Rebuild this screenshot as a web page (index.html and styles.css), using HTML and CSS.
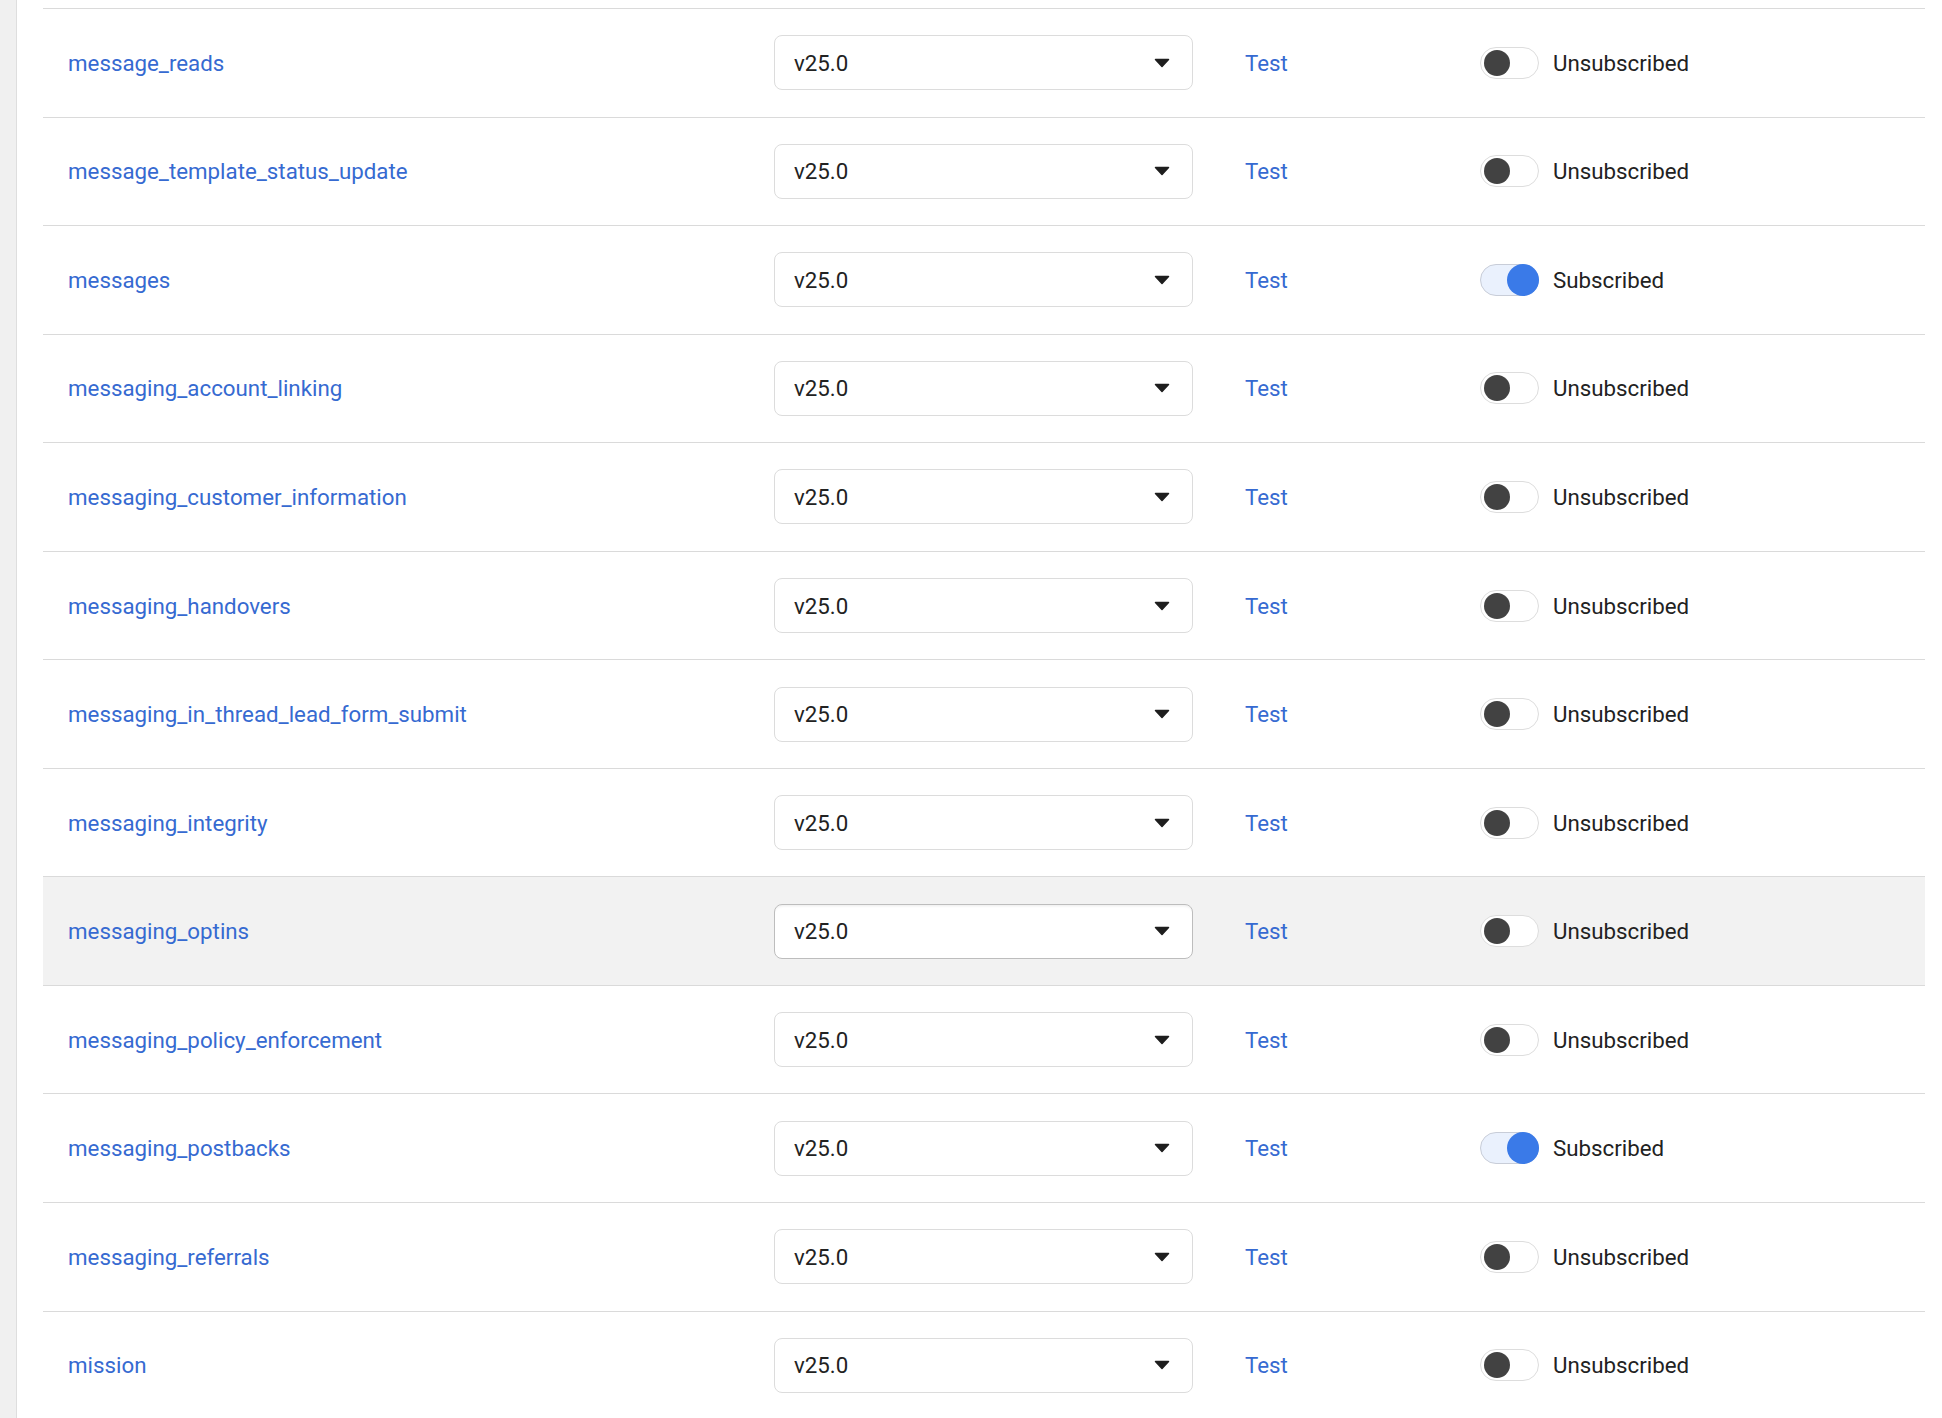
FILE: index.html
```html
<!DOCTYPE html>
<html lang="en">
<head>
    <meta charset="UTF-8">
    <meta name="viewport" content="width=device-width, initial-scale=1.0">
    <title>Webhook Fields</title>
    <link rel="stylesheet" href="styles.css">
</head>
<body>
    <div class="page">
        <div class="sidebar"></div>

        <div class="content">
            <div class="fields-list">
                <div class="field-row">
                    <a class="field-name" href="#">message_reads</a>
                    <div class="version-cell"><div class="version-select"><span>v25.0</span><svg class="caret" width="16" height="10" viewBox="0 0 16 10"><path d="M1.5 1.5 H14.5 L8 8.5 Z"/></svg></div></div>
                    <a class="test-link" href="#">Test</a>
                    <div class="sub-cell"><span class="toggle"><span class="knob"></span></span><span class="sub-label">Unsubscribed</span></div>
                </div>
                <div class="field-row">
                    <a class="field-name" href="#">message_template_status_update</a>
                    <div class="version-cell"><div class="version-select"><span>v25.0</span><svg class="caret" width="16" height="10" viewBox="0 0 16 10"><path d="M1.5 1.5 H14.5 L8 8.5 Z"/></svg></div></div>
                    <a class="test-link" href="#">Test</a>
                    <div class="sub-cell"><span class="toggle"><span class="knob"></span></span><span class="sub-label">Unsubscribed</span></div>
                </div>
                <div class="field-row">
                    <a class="field-name" href="#">messages</a>
                    <div class="version-cell"><div class="version-select"><span>v25.0</span><svg class="caret" width="16" height="10" viewBox="0 0 16 10"><path d="M1.5 1.5 H14.5 L8 8.5 Z"/></svg></div></div>
                    <a class="test-link" href="#">Test</a>
                    <div class="sub-cell"><span class="toggle on"><span class="knob"></span></span><span class="sub-label">Subscribed</span></div>
                </div>
                <div class="field-row">
                    <a class="field-name" href="#">messaging_account_linking</a>
                    <div class="version-cell"><div class="version-select"><span>v25.0</span><svg class="caret" width="16" height="10" viewBox="0 0 16 10"><path d="M1.5 1.5 H14.5 L8 8.5 Z"/></svg></div></div>
                    <a class="test-link" href="#">Test</a>
                    <div class="sub-cell"><span class="toggle"><span class="knob"></span></span><span class="sub-label">Unsubscribed</span></div>
                </div>
                <div class="field-row">
                    <a class="field-name" href="#">messaging_customer_information</a>
                    <div class="version-cell"><div class="version-select"><span>v25.0</span><svg class="caret" width="16" height="10" viewBox="0 0 16 10"><path d="M1.5 1.5 H14.5 L8 8.5 Z"/></svg></div></div>
                    <a class="test-link" href="#">Test</a>
                    <div class="sub-cell"><span class="toggle"><span class="knob"></span></span><span class="sub-label">Unsubscribed</span></div>
                </div>
                <div class="field-row">
                    <a class="field-name" href="#">messaging_handovers</a>
                    <div class="version-cell"><div class="version-select"><span>v25.0</span><svg class="caret" width="16" height="10" viewBox="0 0 16 10"><path d="M1.5 1.5 H14.5 L8 8.5 Z"/></svg></div></div>
                    <a class="test-link" href="#">Test</a>
                    <div class="sub-cell"><span class="toggle"><span class="knob"></span></span><span class="sub-label">Unsubscribed</span></div>
                </div>
                <div class="field-row">
                    <a class="field-name" href="#">messaging_in_thread_lead_form_submit</a>
                    <div class="version-cell"><div class="version-select"><span>v25.0</span><svg class="caret" width="16" height="10" viewBox="0 0 16 10"><path d="M1.5 1.5 H14.5 L8 8.5 Z"/></svg></div></div>
                    <a class="test-link" href="#">Test</a>
                    <div class="sub-cell"><span class="toggle"><span class="knob"></span></span><span class="sub-label">Unsubscribed</span></div>
                </div>
                <div class="field-row">
                    <a class="field-name" href="#">messaging_integrity</a>
                    <div class="version-cell"><div class="version-select"><span>v25.0</span><svg class="caret" width="16" height="10" viewBox="0 0 16 10"><path d="M1.5 1.5 H14.5 L8 8.5 Z"/></svg></div></div>
                    <a class="test-link" href="#">Test</a>
                    <div class="sub-cell"><span class="toggle"><span class="knob"></span></span><span class="sub-label">Unsubscribed</span></div>
                </div>
                <div class="field-row hovered">
                    <a class="field-name" href="#">messaging_optins</a>
                    <div class="version-cell"><div class="version-select"><span>v25.0</span><svg class="caret" width="16" height="10" viewBox="0 0 16 10"><path d="M1.5 1.5 H14.5 L8 8.5 Z"/></svg></div></div>
                    <a class="test-link" href="#">Test</a>
                    <div class="sub-cell"><span class="toggle"><span class="knob"></span></span><span class="sub-label">Unsubscribed</span></div>
                </div>
                <div class="field-row">
                    <a class="field-name" href="#">messaging_policy_enforcement</a>
                    <div class="version-cell"><div class="version-select"><span>v25.0</span><svg class="caret" width="16" height="10" viewBox="0 0 16 10"><path d="M1.5 1.5 H14.5 L8 8.5 Z"/></svg></div></div>
                    <a class="test-link" href="#">Test</a>
                    <div class="sub-cell"><span class="toggle"><span class="knob"></span></span><span class="sub-label">Unsubscribed</span></div>
                </div>
                <div class="field-row">
                    <a class="field-name" href="#">messaging_postbacks</a>
                    <div class="version-cell"><div class="version-select"><span>v25.0</span><svg class="caret" width="16" height="10" viewBox="0 0 16 10"><path d="M1.5 1.5 H14.5 L8 8.5 Z"/></svg></div></div>
                    <a class="test-link" href="#">Test</a>
                    <div class="sub-cell"><span class="toggle on"><span class="knob"></span></span><span class="sub-label">Subscribed</span></div>
                </div>
                <div class="field-row">
                    <a class="field-name" href="#">messaging_referrals</a>
                    <div class="version-cell"><div class="version-select"><span>v25.0</span><svg class="caret" width="16" height="10" viewBox="0 0 16 10"><path d="M1.5 1.5 H14.5 L8 8.5 Z"/></svg></div></div>
                    <a class="test-link" href="#">Test</a>
                    <div class="sub-cell"><span class="toggle"><span class="knob"></span></span><span class="sub-label">Unsubscribed</span></div>
                </div>
                <div class="field-row">
                    <a class="field-name" href="#">mission</a>
                    <div class="version-cell"><div class="version-select"><span>v25.0</span><svg class="caret" width="16" height="10" viewBox="0 0 16 10"><path d="M1.5 1.5 H14.5 L8 8.5 Z"/></svg></div></div>
                    <a class="test-link" href="#">Test</a>
                    <div class="sub-cell"><span class="toggle"><span class="knob"></span></span><span class="sub-label">Unsubscribed</span></div>
                </div>
            </div>
        </div>
    </div>
</body>
</html>
```

FILE: styles.css
```css
* {
    margin: 0;
    padding: 0;
    box-sizing: border-box;
}

body {
    background-color: white;
    font-family: Roboto, "Liberation Sans", Arial, sans-serif;
    font-size: 22.3px;
    color: #1c1e21;
    overflow: hidden;
}

.page {
    display: flex;
    min-height: 100vh;
}

.sidebar {
    width: 17px;
    flex-shrink: 0;
    background-color: #f0f0f0;
    border-right: 1px solid #dedede;
}

.content {
    flex: 1;
    padding: 8px 17px 0 26px;
}

.fields-list {
    border-top: 1px solid #dadada;
}

.field-row {
    display: grid;
    grid-template-columns: 732px 471px 235px 1fr;
    align-items: center;
    height: 108.56px;
    padding-left: 25px;
    border-bottom: 1px solid #dadada;
}

.field-row.hovered {
    background-color: #f2f2f2;
}

.field-name,
.test-link {
    color: #366ad1;
    text-decoration: none;
}

.version-cell {
    margin-left: -26px;
}

.version-select {
    width: 419px;
    height: 55px;
    display: flex;
    align-items: center;
    justify-content: space-between;
    padding: 0 22px 0 19px;
    background-color: white;
    border: 1px solid #dcdcdc;
    border-radius: 8px;
    color: #222;
}

.hovered .version-select {
    border-color: #bdbdbd;
    box-shadow: inset 0 3px 3px -2px rgba(0,0,0,0.08);
}

.caret {
    fill: #1e1e1e;
    stroke: #1e1e1e;
    stroke-width: 1.5;
    stroke-linejoin: round;
}

.test-link {
    margin-left: -26px;
}

.sub-cell {
    display: flex;
    align-items: center;
    gap: 14px;
    margin-left: -26px;
}

.toggle {
    position: relative;
    width: 59px;
    height: 32px;
    border: 1px solid #dddddd;
    border-radius: 16px;
    background-color: white;
}

.knob {
    position: absolute;
    left: 3px;
    top: 2px;
    width: 26px;
    height: 26px;
    border-radius: 50%;
    background-color: #424242;
}

.toggle.on {
    background-color: #eaf1fd;
    border-color: #c8cdd8;
}

.toggle.on .knob {
    left: auto;
    right: -1px;
    top: -1px;
    width: 32px;
    height: 32px;
    background-color: #3a7ae8;
}

.sub-label {
    color: #222;
}
```
